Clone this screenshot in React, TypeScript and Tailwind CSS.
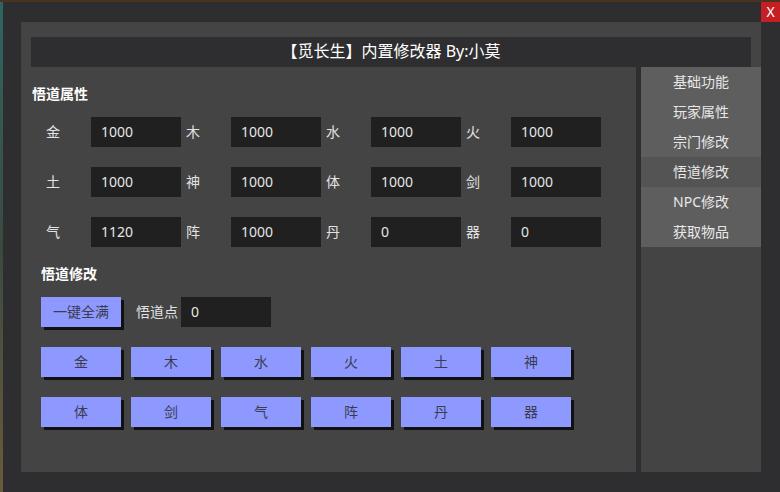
import React from 'react';

const font = { fontFamily: '"Noto Sans", "Noto Sans CJK SC", sans-serif' };

const attrRows: [string, string][][] = [
  [['金', '1000'], ['木', '1000'], ['水', '1000'], ['火', '1000']],
  [['土', '1000'], ['神', '1000'], ['体', '1000'], ['剑', '1000']],
  [['气', '1120'], ['阵', '1000'], ['丹', '0'], ['器', '0']],
];

const btnRows = [
  ['金', '木', '水', '火', '土', '神'],
  ['体', '剑', '气', '阵', '丹', '器'],
];

const menu = ['基础功能', '玩家属性', '宗门修改', '悟道修改', 'NPC修改', '获取物品'];

function Btn({ label }: { label: string }) {
  return (
    <button className="w-[80px] h-[30px] pb-[2px] bg-[#8d99ff] text-[#3b3c52] text-[14px] shadow-[3px_3px_0_#111]">
      {label}
    </button>
  );
}

export default function App() {
  return (
    <div className="w-[780px] h-[492px] flex flex-col bg-[#2e2e30] overflow-hidden" style={font}>
      <div className="h-[2px] bg-[#4a3420]" />
      <div className="flex flex-1">
        <div className="w-[3px] bg-gradient-to-b from-[#2c6662] via-[#3a4a40] to-[#6a5a3a]" />
        <div className="flex-1 flex flex-col bg-[#2e2e30]">
          {/* top strip with close button */}
          <div className="h-[20px] flex justify-end">
            <div className="w-[19px] h-[20px] bg-[#c41f23] text-white text-[14px] leading-[19px] text-center">X</div>
          </div>

          <div className="ml-[18px] w-[740px] flex flex-col">
            {/* header */}
            <div className="h-[45px] bg-[#444444] px-[10px] pt-[15px]">
              <div className="h-[30px] pb-[2px] bg-[#2e2e30] text-white text-[16px] flex items-center justify-center">
                【觅长生】内置修改器 By:小莫
              </div>
            </div>

            <div className="flex gap-[5px] h-[405px]">
              {/* main panel */}
              <div className="w-[615px] bg-[#444444] pt-[17px]">
                <div className="ml-[11px] h-[20px] leading-[20px] text-white text-[14px] font-bold">悟道属性</div>

                <div className="mt-[13px] ml-[20px] flex flex-col gap-[20px]">
                  {attrRows.map((row, i) => (
                    <div key={i} className="flex">
                      {row.map(([k, v]) => (
                        <div key={k} className="flex items-center">
                          <span className="w-[50px] pl-[5px] pb-[2px] text-[14px] text-[#e2e2e2]">{k}</span>
                          <div className="w-[90px] h-[30px] bg-[#202020] pl-[10px] pb-[2px] flex items-center text-[14px] text-[#e6e6e6]">
                            {v}
                          </div>
                        </div>
                      ))}
                    </div>
                  ))}
                </div>

                <div className="mt-[17px] ml-[20px] h-[20px] leading-[20px] text-white text-[14px] font-bold">悟道修改</div>

                <div className="mt-[13px] ml-[20px] flex items-center">
                  <Btn label="一键全满" />
                  <span className="ml-[15px] pb-[2px] text-[14px] text-[#e2e2e2]">悟道点</span>
                  <div className="ml-[3px] w-[90px] h-[30px] bg-[#202020] pl-[10px] pb-[2px] flex items-center text-[14px] text-[#e6e6e6]">
                    0
                  </div>
                </div>

                <div className="mt-[20px] ml-[20px] flex flex-col gap-[20px]">
                  {btnRows.map((row, i) => (
                    <div key={i} className="flex gap-[10px]">
                      {row.map((b) => (
                        <Btn key={b} label={b} />
                      ))}
                    </div>
                  ))}
                </div>
              </div>

              {/* sidebar */}
              <div className="w-[120px] bg-[#444444] flex flex-col">
                {menu.map((m) => (
                  <div
                    key={m}
                    className={`h-[30px] pb-[2px] flex items-center justify-center text-[14px] text-[#e8e8e8] ${
                      m === '悟道修改' ? 'bg-[#545454]' : 'bg-[#5e5e5e]'
                    }`}
                  >
                    {m}
                  </div>
                ))}
              </div>
            </div>
          </div>
        </div>
      </div>
    </div>
  );
}
